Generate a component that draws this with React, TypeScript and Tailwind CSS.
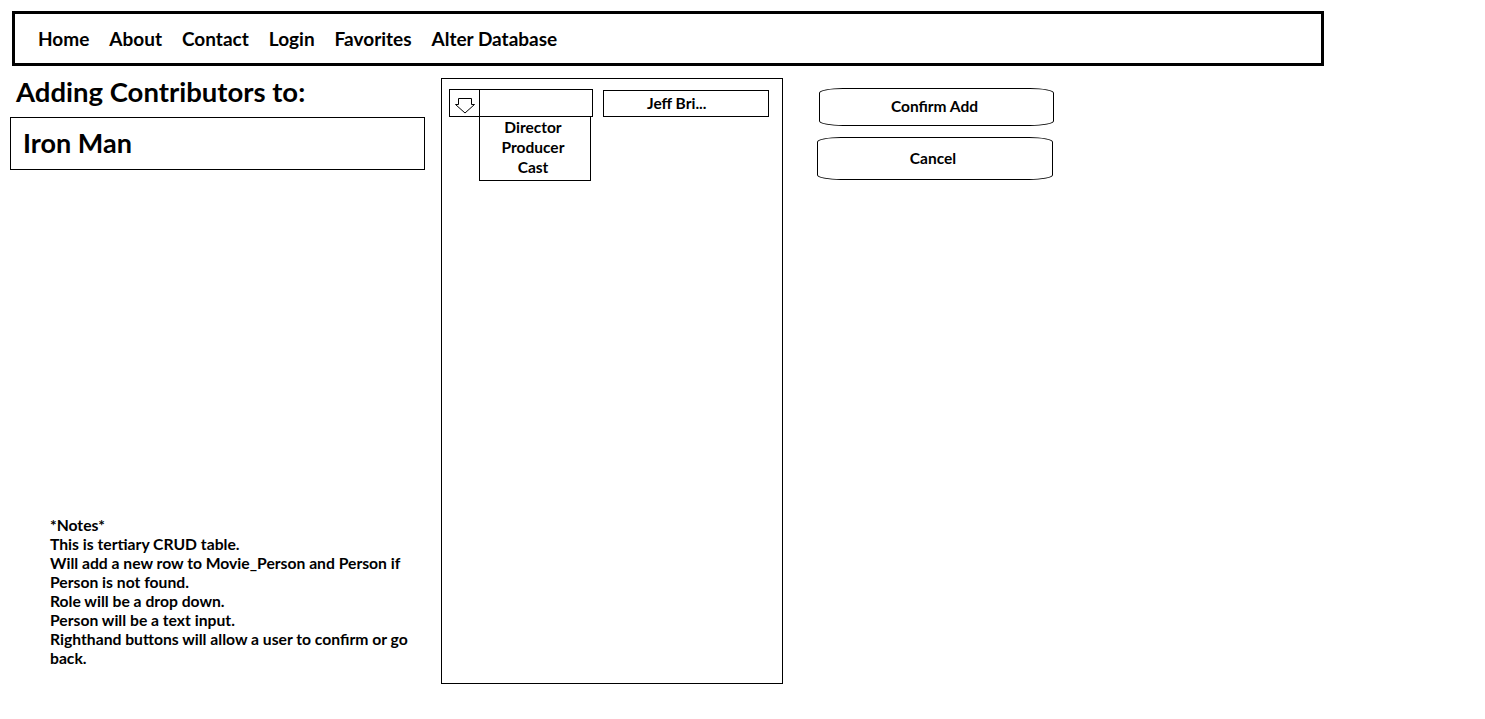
import { ReactNode } from 'react'

const navItems = ['Home', 'About', 'Contact', 'Login', 'Favorites', 'Alter Database']
const roles = ['Director', 'Producer', 'Cast']

// lines kept as in the mockup, wrapping included
const notes = [
  '*Notes*',
  'This is tertiary CRUD table.',
  'Will add a new row to Movie_Person and Person if',
  'Person is not found.',
  'Role will be a drop down.',
  'Person will be a text input.',
  'Righthand buttons will allow a user to confirm or go',
  'back.',
]

function PillButton({ children, className }: { children: ReactNode; className: string }) {
  return (
    <button
      className={`flex items-center justify-center border border-black rounded-[24px/5px] bg-white text-[15.5px] font-bold text-black ${className}`}
    >
      {children}
    </button>
  )
}

function ArrowDown() {
  return (
    <svg width="22" height="16" viewBox="0 0 22 16" fill="none" stroke="black" strokeWidth="1">
      <path d="M4.5 0.5 H17.5 V6.5 H20.5 L11 15 L1.5 6.5 H4.5 Z" />
    </svg>
  )
}

export default function App() {
  return (
    <div className="min-h-screen bg-white text-black font-['Lato','Open_Sans',sans-serif]">
      {/* Nav */}
      <nav className="ml-[12px] mt-[11px] w-[1312px] h-[55px] border-[3px] border-black flex items-center pl-[23px] pt-[2px] gap-[20px] text-[19px] font-bold">
        {navItems.map((item) => (
          <span key={item}>{item}</span>
        ))}
      </nav>

      <div className="flex mt-[12px] pl-[10px]">
        {/* Left column */}
        <div className="w-[415px] flex flex-col">
          <h1 className="text-[27.5px] font-bold leading-[30px] pl-[6px] mt-[-1px]">Adding Contributors to:</h1>
          <div className="mt-[10px] h-[53px] border border-black flex items-center pl-[12px] text-[27px] font-bold">
            Iron Man
          </div>
          <div className="mt-[346px] pl-[40px] text-[15.7px] font-bold leading-[19px]">
            {notes.map((n) => (
              <p key={n} className="whitespace-nowrap">{n}</p>
            ))}
          </div>
        </div>

        {/* Middle panel */}
        <div className="ml-[16px] w-[342px] h-[606px] border border-black flex items-start gap-[10px] pl-[7px] pt-[10px]">
          <div className="flex flex-col">
            <div className="flex h-[28px]">
              <div className="w-[31px] h-[28px] border border-black flex items-start justify-center pt-[8px]">
                <ArrowDown />
              </div>
              <div className="w-[113px] h-[28px] border border-black border-l-0" />
            </div>
            <div className="ml-[30px] w-[112px] border border-black border-t-0 flex flex-col items-center text-[15.5px] font-bold leading-[20px] pr-[4px] pb-[3px]">
              {roles.map((r) => (
                <span key={r}>{r}</span>
              ))}
            </div>
          </div>
          <div className="mt-[1px] w-[166px] h-[27px] border border-black flex items-center pl-[43px] text-[15.5px] font-bold">
            Jeff Bri...
          </div>
        </div>

        {/* Right column */}
        <div className="ml-[34px] pt-[10px] flex flex-col gap-[11px]">
          <PillButton className="w-[235px] h-[38px] ml-[2px] pr-[4px]">Confirm Add</PillButton>
          <PillButton className="w-[236px] h-[43px] pr-[4px]">Cancel</PillButton>
        </div>
      </div>
    </div>
  )
}
